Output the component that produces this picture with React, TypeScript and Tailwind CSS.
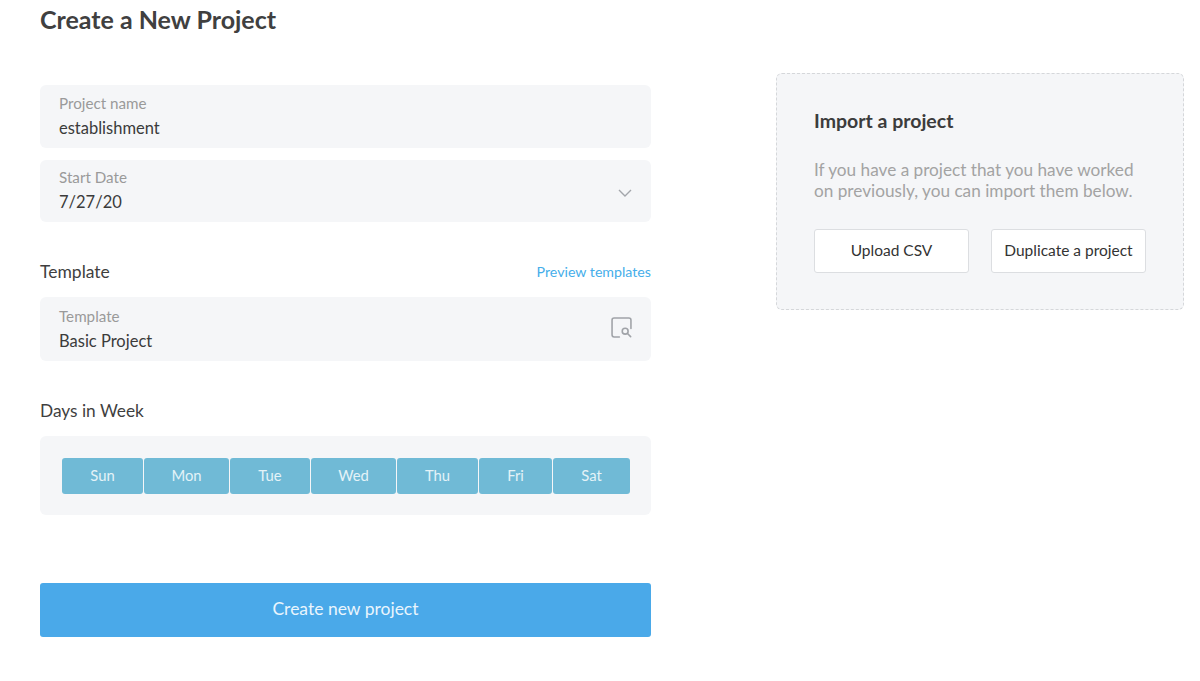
const days = [
  { label: 'Sun', width: 'w-[81px]' },
  { label: 'Mon', width: 'w-[85px]' },
  { label: 'Tue', width: 'w-[80px]' },
  { label: 'Wed', width: 'w-[85px]' },
  { label: 'Thu', width: 'w-[81px]' },
  { label: 'Fri', width: 'w-[73px]' },
  { label: 'Sat', width: 'w-[77px]' },
];

function Field({ label, value, height, children }: { label: string; value: string; height: string; children?: React.ReactNode }) {
  return (
    <div className={`flex items-center justify-between rounded-md bg-[#f5f6f8] pl-[19px] pr-[19px] ${height}`}>
      <div className="flex flex-col">
        <span className="text-[15.2px] leading-[20px] text-[#9a9a9a]">{label}</span>
        <span className="mt-[4px] text-[16.5px] leading-[22px] text-[#3b3b3b]">{value}</span>
      </div>
      {children}
    </div>
  );
}

export default function App() {
  return (
    <div className="flex h-[681px] w-[1200px] items-start overflow-hidden bg-white pl-[40px] font-['Lato',sans-serif]">
      <div className="flex w-[611px] flex-col">
        <h1 className="mt-[4px] text-[25px] leading-[30px] font-bold text-[#404040]">Create a New Project</h1>

        <div className="mt-[51px] flex flex-col gap-[12px]">
          <Field label="Project name" value="establishment" height="h-[63px] pb-[2px]" />
          <Field label="Start Date" value="7/27/20" height="h-[62px] pb-[2px]">
            <svg width="14" height="8" viewBox="0 0 14 8" fill="none" stroke="#a3a6ab" strokeWidth="1.4" className="mt-[6px]">
              <path d="M1 1l6 6 6-6" />
            </svg>
          </Field>
        </div>

        <div className="mt-[38px] flex items-start justify-between">
          <span className="text-[17.5px] leading-[24px] text-[#3f3f3f]">Template</span>
          <a className="text-[14.2px] leading-[23px] text-[#45aeea]">Preview templates</a>
        </div>

        <div className="mt-[13px]">
          <Field label="Template" value="Basic Project" height="h-[64px]">
            <svg width="21" height="21" viewBox="0 0 20 20" fill="none" stroke="#a0a3a8" strokeWidth="1.5" strokeLinecap="round" className="mt-[-3px]">
              <path d="M8 19H3a2 2 0 0 1-2-2V3a2 2 0 0 1 2-2h14a2 2 0 0 1 2 2v8" />
              <circle cx="13.5" cy="13.5" r="2.8" />
              <path d="M15.7 15.7l3 3" />
            </svg>
          </Field>
        </div>

        <span className="mt-[38px] text-[17.3px] leading-[24px] text-[#3f3f3f]">Days in Week</span>

        <div className="mt-[13px] flex h-[79px] items-center gap-[1px] rounded-md bg-[#f5f6f8] pl-[22px]">
          {days.map((d) => (
            <button key={d.label} className={`h-[36px] rounded-[3px] bg-[#70bad6] pb-[1px] text-[14.8px] text-[#e4f3f8] ${d.width}`}>
              {d.label}
            </button>
          ))}
        </div>

        <button className="mt-[68px] h-[54px] rounded-[3px] bg-[#4aa9e9] pb-[2px] text-[17.5px] text-[#e9f5fd]">Create new project</button>
      </div>

      <div className="mt-[73px] ml-[125px] h-[237px] w-[408px] rounded-md border border-dashed border-[#d5d7da] bg-[#f5f6f8] pt-[34px] pl-[37px]">
        <h2 className="text-[19.5px] leading-[26px] font-bold text-[#3c3c3c]">Import a project</h2>
        <p className="mt-[25px] text-[17.2px] leading-[21px] text-[#a3a3a3]">
          If you have a project that you have worked
          <br />
          on previously, you can import them below.
        </p>
        <div className="mt-[28px] flex gap-[22px]">
          <button className="h-[44px] w-[155px] rounded-[3px] border border-[#dcdee1] bg-white text-[15.5px] text-[#333]">Upload CSV</button>
          <button className="h-[44px] w-[155px] rounded-[3px] border border-[#dcdee1] bg-white text-[15.5px] text-[#333]">Duplicate a project</button>
        </div>
      </div>
    </div>
  );
}
